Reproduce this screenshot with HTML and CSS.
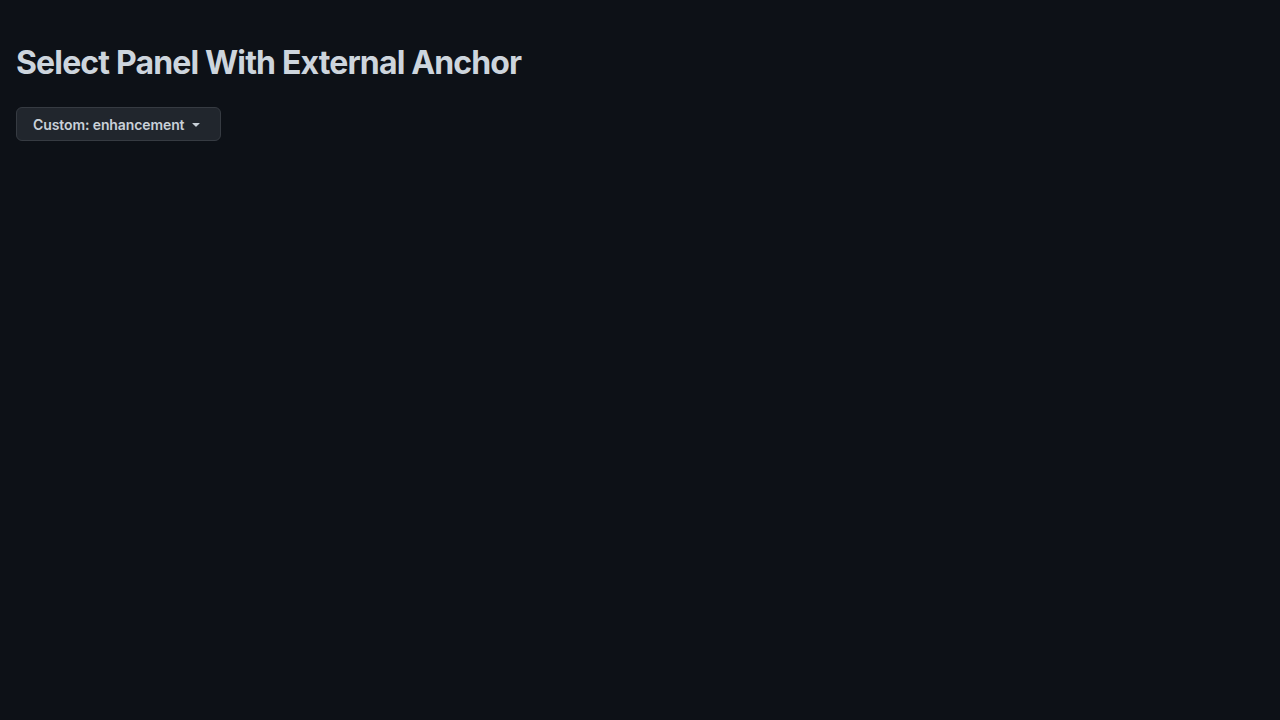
FILE: index.html
```html
<!DOCTYPE html>
<html>
<head>
<meta charset="utf-8">
<link rel="stylesheet" href="styles.css">
</head>
<body>
<main class="page">
  <h1 class="title">Select Panel With External Anchor</h1>
  <div class="controls">
    <button class="btn" type="button">
      <span class="btn-label">Custom: enhancement</span>
      <svg class="caret" width="16" height="16" viewBox="0 0 16 16" aria-hidden="true"><path fill="currentColor" d="m4.427 7.427 3.396 3.396a.25.25 0 0 0 .354 0l3.396-3.396A.25.25 0 0 0 11.396 7H4.604a.25.25 0 0 0-.177.427Z"/></svg>
    </button>
  </div>
</main>
</body>
</html>
```
FILE: styles.css
```css
html, body {
  margin: 0;
  padding: 0;
  background: #0d1117;
  height: 100%;
}
body {
  font-family: Inter, "Noto Sans", "Liberation Sans", sans-serif;
  color: #c9d1d9;
}
.page {
  padding: 16px;
}
.title {
  margin: 27px 0 24px;
  font-size: 32px;
  line-height: 40px;
  font-weight: 700;
  color: #cdd5dd;
  letter-spacing: -0.85px;
}
.controls {
  display: flex;
}
.btn {
  display: inline-flex;
  align-items: center;
  gap: 4px;
  height: 34px;
  padding: 0 16px;
  background: #21262d;
  border: 1px solid #363b42;
  border-radius: 6px;
  color: #c9d1d9;
  font-family: Inter, "Noto Sans", "Liberation Sans", sans-serif;
  font-size: 14px;
  font-weight: 600;
  letter-spacing: -0.1px;
  cursor: pointer;
}
.caret {
  color: #c9d1d9;
  margin-left: 0;
}
```
